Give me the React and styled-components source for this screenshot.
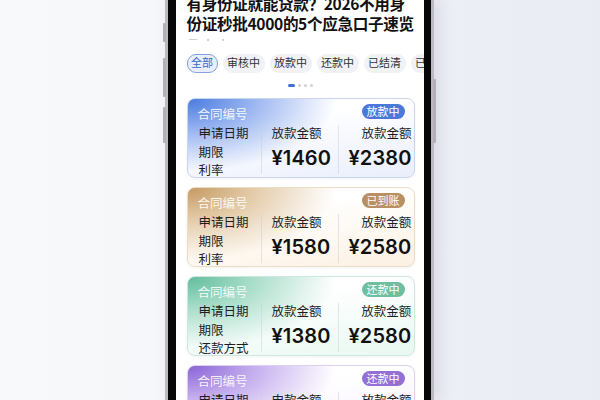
import styled, { createGlobalStyle } from "styled-components";

const GlobalStyle = createGlobalStyle`
  html, body {
    margin: 0;
    padding: 0;
  }
  body {
    font-family: "Noto Sans CJK SC", "Noto Sans", sans-serif;
    background: linear-gradient(90deg, #f8f9fb 0%, #f3f5f8 45%, #eceff5 75%, #e9ecf3 100%);
  }
`;

const Page = styled.div`
  width: 600px;
  height: 400px;
  overflow: hidden;
  display: flex;
  justify-content: center;
`;

const PhoneOuter = styled.div`
  position: relative;
  height: 400px;
  padding: 0 3px;
  margin-left: -2px;
  background: linear-gradient(90deg, #bdb9c3, #d4d1d8 50%, #bdb9c3);
  box-shadow: 6px 0 14px rgba(120, 128, 150, 0.18);
`;

const SideButton = styled.span`
  position: absolute;
  width: 3px;
  border-radius: 1px;
  background: #b4b0ba;
  top: ${(p) => p.$top}px;
  height: ${(p) => p.$h}px;
  ${(p) => (p.$right ? "right: -2px;" : "left: -2px;")}
`;

const Bezel = styled.div`
  height: 100%;
  padding: 0 7px 0 8px;
  background: #070707;
`;

const Screen = styled.div`
  width: 248px;
  height: 100%;
  background: #fff;
  overflow: hidden;
  padding: 0 9px 0 11px;
  box-sizing: border-box;
`;

const Title = styled.h1`
  margin: -7px -12px 0 0;
  font-size: 15.6px;
  line-height: 20px;
  font-weight: 700;
  color: #111;
  letter-spacing: -0.35px;
  white-space: nowrap;
`;

const Fade = styled.div`
  margin-top: 2px;
  height: 10px;
  font-size: 9px;
  line-height: 10px;
  color: #c3c6cd;
  letter-spacing: 2px;
  padding-left: 2px;
`;

const Tabs = styled.div`
  display: flex;
  gap: 5px;
  margin: 9px -12px 0 0;
  white-space: nowrap;
`;

const Tab = styled.span`
  flex: none;
  height: 17px;
  line-height: 15px;
  padding: 0 3.5px;
  border-radius: 9px;
  font-size: 11px;
  border: 1px solid ${(p) => (p.$active ? "#86a3df" : "transparent")};
  background: ${(p) => (p.$active ? "#e7eefc" : "#f1f2f5")};
  color: ${(p) => (p.$active ? "#3b69cc" : "#333")};
`;

const Dots = styled.div`
  display: flex;
  justify-content: center;
  align-items: center;
  gap: 3px;
  margin: 10px 0 11px;
  height: 4px;
`;

const Dot = styled.span`
  width: ${(p) => (p.$active ? 7 : 3)}px;
  height: 3px;
  border-radius: 2px;
  background: ${(p) => (p.$active ? "#3f6fd6" : "#cdd1da")};
`;

const CardList = styled.div`
  display: flex;
  flex-direction: column;
  gap: 9px;
`;

const Card = styled.div`
  flex: none;
  height: 80px;
  box-sizing: border-box;
  border-radius: 8px;
  border: 1px solid ${(p) => p.$border};
  padding: 5px 9px 0 10px;
  background:
    radial-gradient(ellipse 78% 110% at 0% 0%, ${(p) => p.$main} 0%, ${(p) => p.$mid} 35%, rgba(255, 255, 255, 0) 84%),
    linear-gradient(170deg, #ffffff 30%, ${(p) => p.$tint} 100%);
  box-shadow: 0 1px 3px rgba(90, 100, 130, 0.08);
`;

const CardHead = styled.div`
  display: flex;
  justify-content: space-between;
  align-items: flex-start;
  height: 15px;
`;

const ContractNo = styled.span`
  font-size: 12.5px;
  line-height: 15px;
  color: rgba(255, 255, 255, 0.9);
  margin-top: 2px;
`;

const Badge = styled.span`
  height: 15px;
  line-height: 15px;
  padding: 0 5px;
  border-radius: 8px;
  font-size: 11px;
  color: #fff;
  background: ${(p) => p.$color};
`;

const Body = styled.div`
  display: grid;
  grid-template-columns: 63px 77px 1fr;
  margin-top: 5px;
`;

const LeftCol = styled.div`
  display: flex;
  flex-direction: column;
  font-size: 12.5px;
  line-height: 18.5px;
  color: #1d1d1f;
  padding-left: 1px;
`;

const AmountCol = styled.div`
  display: flex;
  flex-direction: column;
  align-items: ${(p) => (p.$right ? "flex-end" : "flex-start")};
  border-left: 1px solid rgba(200, 206, 218, 0.5);
  padding-left: 10px;
  margin: 1px 0 6px;
`;

const AmountLabel = styled.span`
  font-size: 12.5px;
  line-height: 15px;
  color: #1d1d1f;
`;

const Amount = styled.span`
  margin-top: 7px;
  font-family: Inter, "Noto Sans CJK SC", sans-serif;
  font-size: 20px;
  line-height: 22px;
  font-weight: 600;
  color: #111;
  letter-spacing: 0.1px;
`;

const cards = [
  {
    status: "放款中",
    main: "#4a7be0",
    mid: "rgba(120, 156, 236, 0.78)",
    tint: "#e9eefc",
    border: "#cbd5ec",
    badge: "#4b79da",
    rows: ["申请日期", "期限", "利率"],
    midLabel: "放款金额",
    a: "¥1460",
    b: "¥2380",
  },
  {
    status: "已到账",
    main: "#c49a62",
    mid: "rgba(218, 186, 140, 0.78)",
    tint: "#fcf1e2",
    border: "#ecdcc6",
    badge: "#b89064",
    rows: ["申请日期", "期限", "利率"],
    midLabel: "放款金额",
    a: "¥1580",
    b: "¥2580",
  },
  {
    status: "还款中",
    main: "#62bd9c",
    mid: "rgba(140, 210, 184, 0.78)",
    tint: "#e8f8f1",
    border: "#cfe8dd",
    badge: "#6dbf9f",
    rows: ["申请日期", "期限", "还款方式"],
    midLabel: "放款金额",
    a: "¥1380",
    b: "¥2580",
  },
  {
    status: "还款中",
    main: "#8963d6",
    mid: "rgba(176, 146, 232, 0.78)",
    tint: "#f5eefd",
    border: "#ddd0f0",
    badge: "#9470d6",
    rows: ["申请日期", "期限", "利率"],
    midLabel: "申款金额",
    a: "¥1680",
    b: "¥2680",
  },
];

const tabs = ["全部", "审核中", "放款中", "还款中", "已结清", "已逾期"];

export default function App() {
  return (
    <>
      <GlobalStyle />
      <Page>
        <PhoneOuter>
          <SideButton $top={23} $h={19} />
          <SideButton $top={58} $h={39} />
          <SideButton $top={107} $h={36} />
          <SideButton $right $top={79} $h={64} />
          <Bezel>
            <Screen>
              <Title>
                有身份证就能贷款？2026不用身
                <br />
                份证秒批4000的5个应急口子速览
              </Title>
              <Fade>一 · ·</Fade>
              <Tabs>
                {tabs.map((t, i) => (
                  <Tab key={t} $active={i === 0}>{t}</Tab>
                ))}
              </Tabs>
              <Dots>
                <Dot $active />
                <Dot />
                <Dot />
                <Dot />
              </Dots>
              <CardList>
                {cards.map((c, i) => (
                  <Card key={i} $main={c.main} $mid={c.mid} $tint={c.tint} $border={c.border}>
                    <CardHead>
                      <ContractNo>合同编号</ContractNo>
                      <Badge $color={c.badge}>{c.status}</Badge>
                    </CardHead>
                    <Body>
                      <LeftCol>
                        {c.rows.map((r) => (
                          <span key={r}>{r}</span>
                        ))}
                      </LeftCol>
                      <AmountCol>
                        <AmountLabel>{c.midLabel}</AmountLabel>
                        <Amount>{c.a}</Amount>
                      </AmountCol>
                      <AmountCol $right>
                        <AmountLabel>放款金额</AmountLabel>
                        <Amount>{c.b}</Amount>
                      </AmountCol>
                    </Body>
                  </Card>
                ))}
              </CardList>
            </Screen>
          </Bezel>
        </PhoneOuter>
      </Page>
    </>
  );
}
